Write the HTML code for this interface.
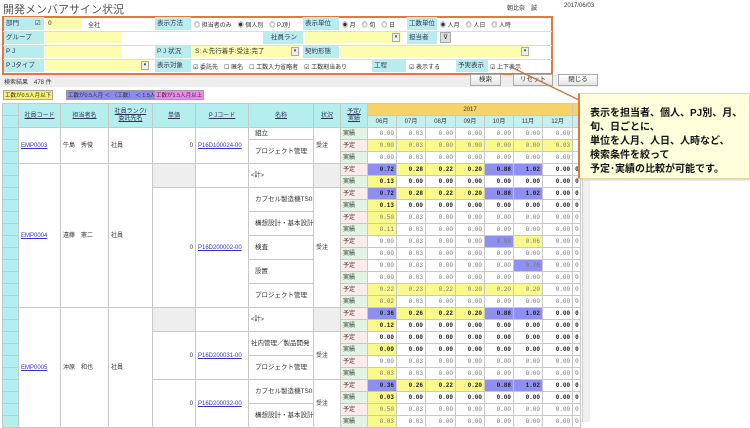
<!DOCTYPE html>
<html><head><meta charset="utf-8"><style>
*{margin:0;padding:0;box-sizing:border-box}
body{width:750px;height:422px;overflow:hidden;background:#fff;position:relative;font-family:"Liberation Sans","Noto Sans CJK JP",sans-serif;font-size:7px;color:#333}
.a{position:absolute;white-space:nowrap}
.f{font-size:6px}
.lb{position:absolute;background:#b9ecec;height:13px;line-height:13px;padding-left:2px;font-size:6.5px;color:#335}
.in{position:absolute;background:#fdfdb0;height:11px;line-height:11px;padding-left:3px;font-size:6.5px}
.dd{position:absolute;right:1px;top:1px;width:8px;height:9px;background:#eee;border:1px solid #aaa;font-size:5px;line-height:7px;text-align:center}
.hl{position:absolute;left:3px;width:549px;height:1px;background:#ddd}
.btn{position:absolute;top:74px;height:12px;border:1px solid #aaa;background:linear-gradient(#fff,#e4e4e4);text-align:center;line-height:10px;font-size:6.5px}
table{position:absolute;left:2px;top:103px;border-collapse:collapse;table-layout:fixed;width:578px}
td{border:1px solid #c8c8c8;height:12px;font-size:6px;line-height:10px;padding:0 2px;white-space:nowrap;overflow:hidden}
.s{background:#b4eeee;padding:0}
.h{background:#b4eeee;text-align:center;text-decoration:underline;color:#335}
.yr{background:#f6d366;text-align:center}
.m{background:#c6f0f0;text-align:center}
.n{text-align:right;font-family:"Liberation Mono",monospace;color:#777}
.k .n{color:#222;font-weight:bold}
.y{background:#fafa8c}.b{background:#8f8ff0}
.p{background:#fbeaea}.j{background:#e4f4e4}
.g{background:#eeeeee}
.l{color:#33c;text-decoration:underline}
.r{text-align:right}
.nm{font-size:6.5px;padding-left:6px}
</style></head><body>
<div class="a" style="left:3px;top:1px;font-size:11px;color:#555">開発メンバアサイン状況</div>
<div class="a" style="left:507px;top:3px;font-size:6px">朝比奈　誠</div>
<div class="a" style="left:564px;top:3px;font-size:6px">2017/06/03</div>
<div style="position:absolute;left:2px;top:16px;width:551px;height:59px;border:2px solid #e07840"></div>
<div class="hl" style="top:31px"></div><div class="hl" style="top:45px"></div><div class="hl" style="top:59px"></div>
<div class="lb" style="left:4px;top:17px;width:40px">部門 <span style="margin-left:14px">☑</span></div>
<div class="in" style="left:45px;top:18px;width:37px">0</div><div class="a f" style="left:88px;top:20px">全社</div>
<div class="lb" style="left:155px;top:17px;width:36px">表示方法</div>
<div class="a f" style="left:194px;top:20px">◎ 担当者のみ　◉ 個人別　◎ PJ別</div>
<div class="lb" style="left:303px;top:17px;width:36px">表示単位</div>
<div class="a f" style="left:342px;top:20px">◉ 月　◎ 旬　◎ 日</div>
<div class="lb" style="left:407px;top:17px;width:30px">工数単位</div>
<div class="a f" style="left:440px;top:20px">◉ 人月　◎ 人日　◎ 人時</div>
<div class="lb" style="left:4px;top:31px;width:40px">グループ</div>
<div class="in" style="left:45px;top:32px;width:77px"></div>
<div class="lb" style="left:263px;top:31px;width:40px;padding-left:8px">社員ランク</div>
<div class="in" style="left:305px;top:32px;width:96px"><div class="dd">▾</div></div>
<div class="lb" style="left:407px;top:31px;width:30px">担当者</div>
<div class="a" style="left:440px;top:32px;width:11px;height:11px;border:1px solid #aaa;background:#ddd;text-align:center;line-height:9px">⊽</div>
<div class="lb" style="left:4px;top:45px;width:40px">P J</div>
<div class="in" style="left:45px;top:46px;width:77px"></div>
<div class="lb" style="left:155px;top:45px;width:36px">P J 状況</div>
<div class="in" style="left:192px;top:46px;width:108px">S: A:先行着手:受注:完了<div class="dd">▾</div></div>
<div class="lb" style="left:303px;top:45px;width:36px">契約形態</div>
<div class="in" style="left:340px;top:46px;width:190px"><div class="dd">▾</div></div>
<div class="lb" style="left:4px;top:59px;width:40px">P Jタイプ</div>
<div class="in" style="left:45px;top:60px;width:105px"><div class="dd">▾</div></div>
<div class="lb" style="left:155px;top:59px;width:36px">表示対象</div>
<div class="a f" style="left:193px;top:62px">☑ 委託先　☐ 匿名　☐ 工数入力省略者　☑ 工数割当あり</div>
<div class="lb" style="left:372px;top:59px;width:34px">工程</div>
<div class="a f" style="left:409px;top:62px">☑ 表示する</div>
<div class="lb" style="left:456px;top:59px;width:32px">予実表示</div>
<div class="a f" style="left:490px;top:62px">☑ 上下表示</div>
<div style="position:absolute;left:0;top:75px;width:598px;height:12px;background:#eee"></div>
<div class="a f" style="left:4px;top:77px">検索結果　478 件</div>
<div class="btn" style="left:470px;width:31px">検索</div>
<div class="btn" style="left:513px;width:40px">リセット</div>
<div class="btn" style="left:558px;width:40px">閉じる</div>
<div class="a" style="left:3px;top:90px;background:#f8f070;border:1px solid #aa9;padding:0 1px;font-size:5.5px">工数が0.5人月以下</div>
<div class="a" style="left:66px;top:90px;background:#8a8af0;border:1px solid #99a;padding:0 1px;font-size:5.5px">工数が0.5人月 ＜ （工数） ＜ 1.5人月</div>
<div class="a" style="left:154px;top:90px;background:#ee88ee;border:1px solid #a9a;padding:0 1px;font-size:5.5px">工数が1.5人月以上</div>

<table>
<colgroup><col style="width:16px"><col style="width:42px"><col style="width:48px"><col style="width:44px"><col style="width:43px"><col style="width:53px"><col style="width:65px"><col style="width:27px"><col style="width:27px"><col style="width:29px"><col style="width:29px"><col style="width:30px"><col style="width:29px"><col style="width:29px"><col style="width:29px"><col style="width:30px"><col style="width:8px"></colgroup>
<tr><td class="s"></td><td class="h" rowspan="2">社員コード</td><td class="h" rowspan="2">担当者名</td><td class="h" rowspan="2" style="line-height:7px">社員ランク/<br>委託先名</td><td class="h" rowspan="2">単価</td><td class="h" rowspan="2">P Jコード</td><td class="h" rowspan="2">名称</td><td class="h" rowspan="2">状況</td><td class="h" rowspan="2" style="line-height:7px">予定/<br>実績</td><td class="yr" colspan="7">2017</td><td class="yr"></td></tr>
<tr><td class="s"></td><td class="m">06月</td><td class="m">07月</td><td class="m">08月</td><td class="m">09月</td><td class="m">10月</td><td class="m">11月</td><td class="m">12月</td><td class="m"></td></tr>
<tr><td class="s"></td><td rowspan="3" class="l">EMP0003</td><td rowspan="3">牛島　秀俊</td><td rowspan="3">社員</td><td rowspan="3" class="r">0</td><td rowspan="3" class="l">P16D100024-00</td><td class="nm">組立</td><td rowspan="3">受注</td><td class="j">実績</td><td class="n">0.00</td><td class="n">0.03</td><td class="n">0.00</td><td class="n">0.00</td><td class="n">0.00</td><td class="n">0.00</td><td class="n">0.00</td><td></td></tr>
<tr><td class="s"></td><td rowspan="2" class="nm">プロジェクト管理</td><td class="p">予定</td><td class="n y">0.00</td><td class="n y">0.03</td><td class="n y">0.00</td><td class="n y">0.00</td><td class="n y">0.00</td><td class="n y">0.00</td><td class="n y">0.03</td><td></td></tr>
<tr><td class="s"></td><td class="j">実績</td><td class="n">0.00</td><td class="n">0.03</td><td class="n">0.00</td><td class="n">0.00</td><td class="n">0.00</td><td class="n">0.00</td><td class="n">0.00</td><td></td></tr>

<tr class="k"><td class="s"></td><td rowspan="12" class="l">EMP0004</td><td rowspan="12">遠藤　憲二</td><td rowspan="12">社員</td><td rowspan="2" class="g"></td><td rowspan="2"></td><td rowspan="2">&lt;計&gt;</td><td rowspan="2" class="g"></td><td class="p">予定</td><td class="n b">0.72</td><td class="n y">0.28</td><td class="n y">0.22</td><td class="n y">0.20</td><td class="n b">0.88</td><td class="n b">1.02</td><td class="n">0.00</td><td class="n">0</td></tr>
<tr class="k"><td class="s"></td><td class="j">実績</td><td class="n y">0.13</td><td class="n">0.00</td><td class="n">0.00</td><td class="n">0.00</td><td class="n">0.00</td><td class="n">0.00</td><td class="n">0.00</td><td class="n">0</td></tr>
<tr class="k"><td class="s"></td><td rowspan="10" class="r">0</td><td rowspan="10" class="l">P16D200002-00</td><td rowspan="2" class="nm">カプセル製造機TS01</td><td rowspan="10">受注</td><td class="p">予定</td><td class="n b">0.72</td><td class="n y">0.28</td><td class="n y">0.22</td><td class="n y">0.20</td><td class="n b">0.88</td><td class="n b">1.02</td><td class="n">0.00</td><td class="n">0</td></tr>
<tr class="k"><td class="s"></td><td class="j">実績</td><td class="n y">0.13</td><td class="n">0.00</td><td class="n">0.00</td><td class="n">0.00</td><td class="n">0.00</td><td class="n">0.00</td><td class="n">0.00</td><td class="n">0</td></tr>
<tr><td class="s"></td><td rowspan="2" class="nm">構想設計・基本設計</td><td class="p">予定</td><td class="n y">0.50</td><td class="n">0.03</td><td class="n">0.00</td><td class="n">0.00</td><td class="n">0.00</td><td class="n">0.00</td><td class="n">0.00</td><td class="n">0</td></tr>
<tr><td class="s"></td><td class="j">実績</td><td class="n y">0.11</td><td class="n">0.03</td><td class="n">0.00</td><td class="n">0.00</td><td class="n">0.00</td><td class="n">0.00</td><td class="n">0.00</td><td class="n">0</td></tr>
<tr><td class="s"></td><td rowspan="2" class="nm">検査</td><td class="p">予定</td><td class="n">0.00</td><td class="n">0.03</td><td class="n">0.00</td><td class="n">0.00</td><td class="n b">0.88</td><td class="n y">0.06</td><td class="n">0.00</td><td class="n">0</td></tr>
<tr><td class="s"></td><td class="j">実績</td><td class="n">0.00</td><td class="n">0.03</td><td class="n">0.00</td><td class="n">0.00</td><td class="n">0.00</td><td class="n">0.00</td><td class="n">0.00</td><td class="n">0</td></tr>
<tr><td class="s"></td><td rowspan="2" class="nm">設置</td><td class="p">予定</td><td class="n">0.00</td><td class="n">0.03</td><td class="n">0.00</td><td class="n">0.00</td><td class="n">0.00</td><td class="n b">0.76</td><td class="n">0.00</td><td class="n">0</td></tr>
<tr><td class="s"></td><td class="j">実績</td><td class="n">0.00</td><td class="n">0.03</td><td class="n">0.00</td><td class="n">0.00</td><td class="n">0.00</td><td class="n">0.00</td><td class="n">0.00</td><td class="n">0</td></tr>
<tr><td class="s"></td><td rowspan="2" class="nm">プロジェクト管理</td><td class="p">予定</td><td class="n y">0.22</td><td class="n y">0.23</td><td class="n y">0.22</td><td class="n y">0.20</td><td class="n y">0.20</td><td class="n y">0.20</td><td class="n">0.00</td><td class="n">0</td></tr>
<tr><td class="s"></td><td class="j">実績</td><td class="n y">0.02</td><td class="n">0.03</td><td class="n">0.00</td><td class="n">0.00</td><td class="n">0.00</td><td class="n">0.00</td><td class="n">0.00</td><td class="n">0</td></tr>

<tr class="k"><td class="s"></td><td rowspan="10" class="l">EMP0005</td><td rowspan="10">沖原　和也</td><td rowspan="10">社員</td><td rowspan="2" class="g"></td><td rowspan="2"></td><td rowspan="2">&lt;計&gt;</td><td rowspan="2" class="g"></td><td class="p">予定</td><td class="n b">0.36</td><td class="n y">0.26</td><td class="n y">0.22</td><td class="n y">0.20</td><td class="n b">0.88</td><td class="n b">1.02</td><td class="n">0.00</td><td class="n">0</td></tr>
<tr class="k"><td class="s"></td><td class="j">実績</td><td class="n y">0.12</td><td class="n">0.00</td><td class="n">0.00</td><td class="n">0.00</td><td class="n">0.00</td><td class="n">0.00</td><td class="n">0.00</td><td class="n">0</td></tr>
<tr class="k"><td class="s"></td><td rowspan="4" class="r">0</td><td rowspan="4" class="l">P16D200031-00</td><td rowspan="2" class="nm" style="padding-left:2px">社内管理／製品開発</td><td rowspan="4">受注</td><td class="p">予定</td><td class="n">0.00</td><td class="n">0.00</td><td class="n">0.00</td><td class="n">0.00</td><td class="n">0.00</td><td class="n">0.00</td><td class="n">0.00</td><td class="n">0</td></tr>
<tr class="k"><td class="s"></td><td class="j">実績</td><td class="n y">0.09</td><td class="n">0.00</td><td class="n">0.00</td><td class="n">0.00</td><td class="n">0.00</td><td class="n">0.00</td><td class="n">0.00</td><td class="n">0</td></tr>
<tr><td class="s"></td><td rowspan="2" class="nm">プロジェクト管理</td><td class="p">予定</td><td class="n">0.00</td><td class="n">0.03</td><td class="n">0.00</td><td class="n">0.00</td><td class="n">0.00</td><td class="n">0.00</td><td class="n">0.00</td><td class="n">0</td></tr>
<tr><td class="s"></td><td class="j">実績</td><td class="n y">0.03</td><td class="n">0.03</td><td class="n">0.00</td><td class="n">0.00</td><td class="n">0.00</td><td class="n">0.00</td><td class="n">0.00</td><td class="n">0</td></tr>
<tr class="k"><td class="s"></td><td rowspan="4" class="r">0</td><td rowspan="4" class="l">P16D200032-00</td><td rowspan="2" class="nm">カプセル製造機TS01</td><td rowspan="4">受注</td><td class="p">予定</td><td class="n b">0.36</td><td class="n y">0.26</td><td class="n y">0.22</td><td class="n y">0.20</td><td class="n b">0.88</td><td class="n b">1.02</td><td class="n">0.00</td><td class="n">0</td></tr>
<tr class="k"><td class="s"></td><td class="j">実績</td><td class="n y">0.03</td><td class="n">0.00</td><td class="n">0.00</td><td class="n">0.00</td><td class="n">0.00</td><td class="n">0.00</td><td class="n">0.00</td><td class="n">0</td></tr>
<tr><td class="s"></td><td rowspan="2" class="nm">構想設計・基本設計</td><td class="p">予定</td><td class="n y">0.50</td><td class="n">0.03</td><td class="n">0.00</td><td class="n">0.00</td><td class="n">0.00</td><td class="n">0.00</td><td class="n">0.00</td><td class="n">0</td></tr>
<tr><td class="s"></td><td class="j">実績</td><td class="n y">0.03</td><td class="n">0.03</td><td class="n">0.00</td><td class="n">0.00</td><td class="n">0.00</td><td class="n">0.00</td><td class="n">0.00</td><td class="n">0</td></tr>
</table>
<div style="position:absolute;left:582px;top:103px;width:8px;height:319px;background:#f0f0f0;border-left:1px solid #ccc"></div>
<svg style="position:absolute;left:0;top:0" width="750" height="422"><line x1="511" y1="67" x2="581" y2="101" stroke="#d07840" stroke-width="1.5"/></svg>
<div style="position:absolute;left:578px;top:93px;width:172px;height:86px;background:#ffffdc;border:1px solid #e0d8a0;border-left:2px solid #e07840;box-shadow:1px 1px 2px #ccc;padding:13px 0 0 10px;font-size:10px;line-height:14px;color:#111;font-weight:bold">表示を担当者、個人、PJ別、月、<br>旬、日ごとに、<br>単位を人月、人日、人時など、<br>検索条件を絞って<br>予定･実績の比較が可能です。</div>
</body></html>
